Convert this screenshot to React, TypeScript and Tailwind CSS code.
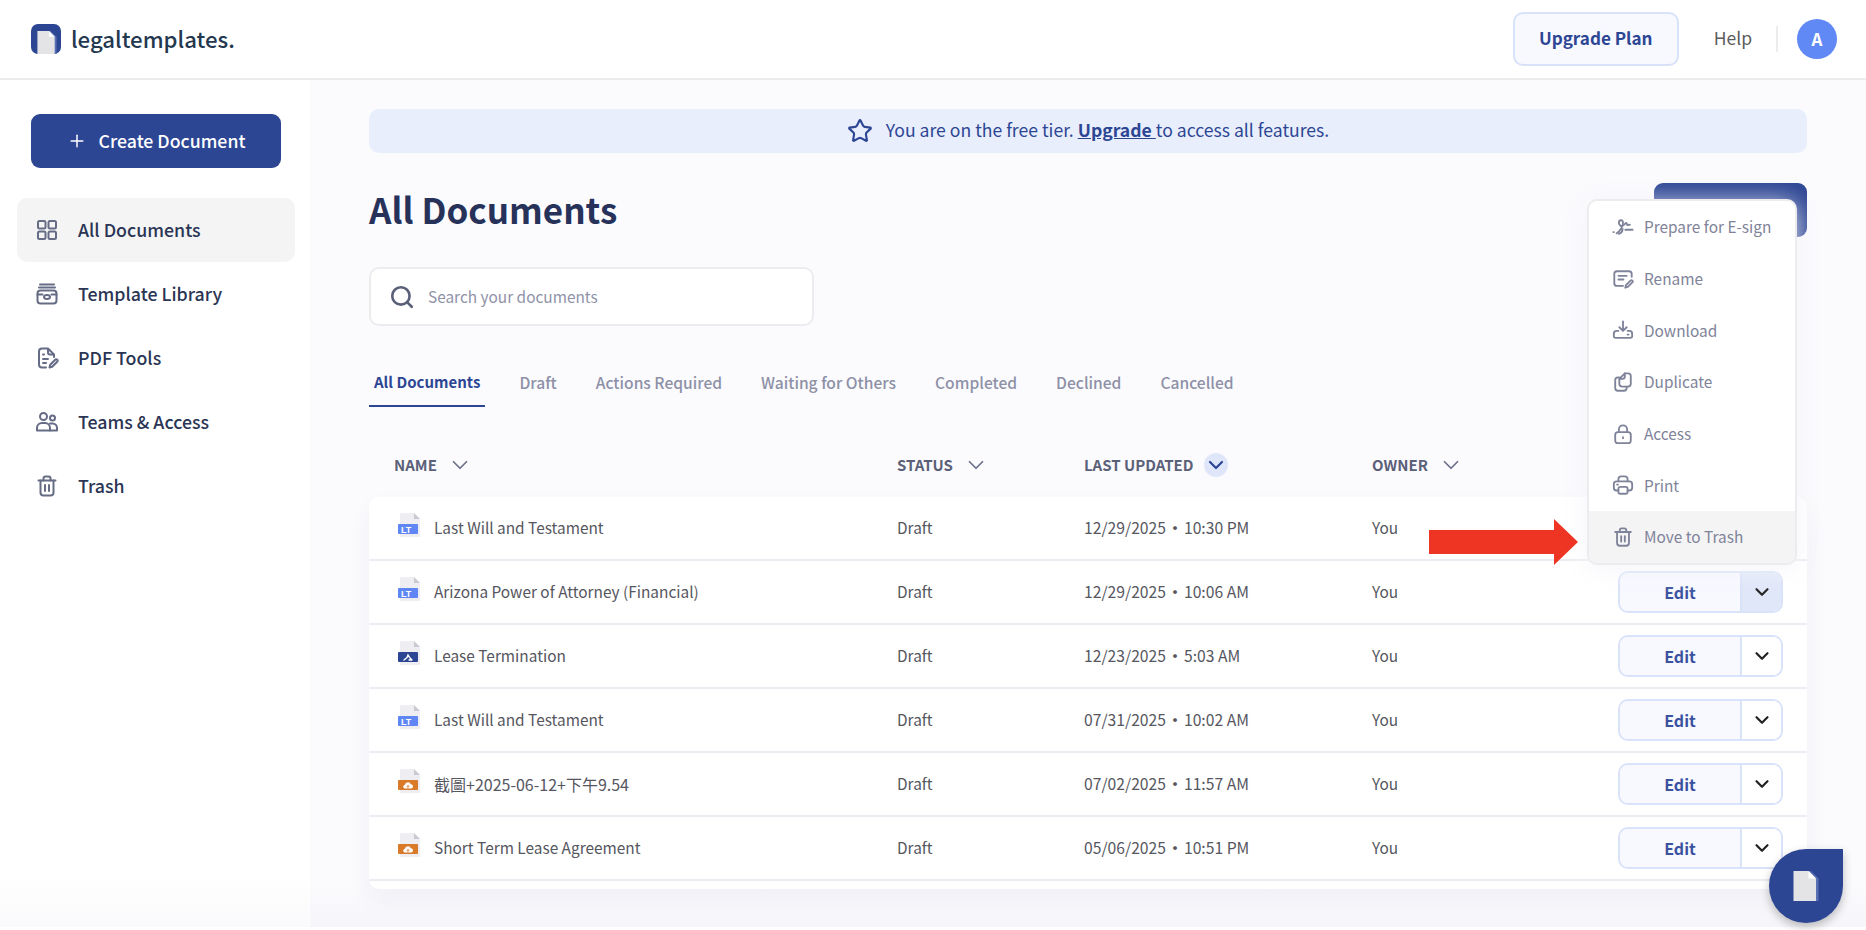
import React from 'react';
import { ChevronDown, Plus, Search, Star } from 'lucide-react';

const FONT = '[font-family:"Noto_Sans_CJK_TC","Noto_Sans",sans-serif]';

type IconProps = { className?: string };

const Svg: React.FC<IconProps & { children: React.ReactNode }> = ({ className, children }) => (
  <svg
    viewBox="0 0 24 24"
    fill="none"
    stroke="currentColor"
    strokeWidth={2}
    strokeLinecap="round"
    strokeLinejoin="round"
    className={className}
  >
    {children}
  </svg>
);

const GridIcon = ({ className }: IconProps) => (
  <Svg className={className}>
    <rect x="3" y="3" width="7.5" height="7.5" rx="1.5" />
    <rect x="13.5" y="3" width="7.5" height="7.5" rx="1.5" />
    <rect x="3" y="13.5" width="7.5" height="7.5" rx="1.5" />
    <rect x="13.5" y="13.5" width="7.5" height="7.5" rx="1.5" />
  </Svg>
);

const LibraryIcon = ({ className }: IconProps) => (
  <Svg className={className}>
    <path d="M5 2.5h14M4 5.5h16" />
    <rect x="2.5" y="8.5" width="19" height="13" rx="3" />
    <path d="M2.5 12.5h5M16.5 12.5h5" />
    <ellipse cx="12" cy="15" rx="3" ry="2" />
  </Svg>
);

const PdfIcon = ({ className }: IconProps) => (
  <Svg className={className}>
    <path d="M11 21.5H7a3 3 0 0 1-3-3v-13a3 3 0 0 1 3-3h6l6 6v2.5" />
    <path d="M13 3v3.5a2 2 0 0 0 2 2h3.5" />
    <path d="M8 8.5h1M8 13h5M8 17h3" />
    <path d="M14.5 21.5l.7-2.8 5-5a1.4 1.4 0 0 1 2 2l-5 5z" />
  </Svg>
);

const TeamIcon = ({ className }: IconProps) => (
  <Svg className={className}>
    <circle cx="8.5" cy="6.5" r="3.5" />
    <circle cx="17.5" cy="8" r="2.5" />
    <path d="M2 20.5v-2.5a5 5 0 0 1 5-5h3a5 5 0 0 1 5 5v2.5z" />
    <path d="M15 20.5h7v-2.5a4.5 4.5 0 0 0-4.5-4.5h-2.5" />
  </Svg>
);

const TrashIcon = ({ className }: IconProps) => (
  <Svg className={className}>
    <path d="M3.5 6.5h17" />
    <path d="M8.5 6.5V4.5a2 2 0 0 1 2-2h3a2 2 0 0 1 2 2v2" />
    <path d="M5.5 6.5v12a3 3 0 0 0 3 3h7a3 3 0 0 0 3-3v-12" />
    <path d="M10 11v6M14 11v6" />
  </Svg>
);

const SignIcon = ({ className }: IconProps) => (
  <Svg className={className}>
    <path d="M1.5 17.5h.5" />
    <path d="M5 19c3-1.5 7.5-8 7-12C11.5 3.500 7.500 4 7.500 7.500c0 3 4.500 4 4 7.500-.3 2-2.500 4-4 4.500" />
    <path d="M12 10.500c1.500-.5 2.500-3 3.500-3s.5 2.500 1.500 2.500 1.500-.5 2.500-.5" />
    <path d="M14.500 15h8" />
  </Svg>
);

const RenameIcon = ({ className }: IconProps) => (
  <Svg className={className}>
    <path d="M12 19.500H5.500a3 3 0 0 1-3-3v-10a3 3 0 0 1 3-3h13a3 3 0 0 1 3 3v3" />
    <path d="M7 8.500h9M7 12.500h5.500" />
    <path d="M14.500 21.500l.7-2.800 5-5a1.400 1.400 0 0 1 2 2l-5 5z" />
  </Svg>
);

const DownloadIcon = ({ className }: IconProps) => (
  <Svg className={className}>
    <path d="M12 2.500v10M8 9l4 4 4-4" />
    <path d="M7 13H5a3 3 0 0 0-3 3v2.500a2 2 0 0 0 2 2h16a2 2 0 0 0 2-2V16a3 3 0 0 0-3-3h-2" />
    <path d="M17 17h1" />
  </Svg>
);

const DuplicateIcon = ({ className }: IconProps) => (
  <Svg className={className}>
    <path d="M14 2.500h3.500a3 3 0 0 1 3 3V14a3 3 0 0 1-3 3H11a3 3 0 0 1-3-3V8.500z" />
    <path d="M14 2.500V6a2.500 2.500 0 0 1-2.500 2.500H8" />
    <path d="M8 7H6.500a3 3 0 0 0-3 3v8.500a3 3 0 0 0 3 3H13a3 3 0 0 0 3-3V17" />
  </Svg>
);

const LockIcon = ({ className }: IconProps) => (
  <Svg className={className}>
    <rect x="3.500" y="10" width="17" height="12" rx="3" />
    <path d="M7.500 10V7a4.500 4.500 0 0 1 9 0v3" />
    <path d="M12 15.500v1" />
  </Svg>
);

const PrintIcon = ({ className }: IconProps) => (
  <Svg className={className}>
    <path d="M7 8V5.500a3 3 0 0 1 3-3h4a3 3 0 0 1 3 3V8" />
    <path d="M7 18H5a3 3 0 0 1-3-3v-4a3 3 0 0 1 3-3h14a3 3 0 0 1 3 3v4a3 3 0 0 1-3 3h-2" />
    <rect x="7" y="14" width="10" height="7.500" rx="2" />
    <path d="M5.500 11.500h1" />
  </Svg>
);

const SheetLogo = ({ className }: IconProps) => (
  <svg viewBox="0 0 20 24" className={className}>
    <path d="M3 0h11l6 6v18H3z" fill="#5a70b4" />
    <path d="M0 0h12l6 6v18H0z" fill="#e4e4e6" />
    <path d="M12 0l6 6h-6z" fill="#ffffff" />
  </svg>
);

type DocKind = 'lt' | 'sign' | 'upload';

const DocIcon = ({ kind }: { kind: DocKind }) => {
  const band = kind === 'lt' ? '#5f86f2' : kind === 'sign' ? '#2d4694' : '#d97a2b';
  return (
    <svg viewBox="0 0 24 26" className="h-[26px] w-[24px] shrink-0">
      <path d="M3 1h14l6 6v18H3z" fill="#eeeef2" />
      <path d="M17 1l6 6h-6z" fill="#c9c9d2" />
      <rect x="1" y="12" width="20" height="10" rx="1" fill={band} />
      {kind === 'lt' && (
        <text x="4" y="20.500" fontSize="9" fontWeight="700" fill="#ffffff" fontFamily="Liberation Sans, sans-serif">
          LT
        </text>
      )}
      {kind === 'sign' && (
        <path d="M7 20l3-2.500 1-2.500 2 3 2 2M12 20h3" stroke="#ffffff" strokeWidth="1.300" fill="none" strokeLinecap="round" />
      )}
      {kind === 'upload' && (
        <>
          <path d="M7.500 20.500a2 2 0 0 1 .5-3.800 3 3 0 0 1 5.800-.5 2.200 2.200 0 0 1 .7 4.300z" fill="#ffffff" />
          <path d="M11 20.500v-3M9.800 18.500l1.200-1.200 1.200 1.200" stroke={band} strokeWidth="0.900" fill="none" />
        </>
      )}
    </svg>
  );
};

const navItems = [
  { name: 'All Documents', icon: GridIcon, active: true },
  { name: 'Template Library', icon: LibraryIcon },
  { name: 'PDF Tools', icon: PdfIcon },
  { name: 'Teams & Access', icon: TeamIcon },
  { name: 'Trash', icon: TrashIcon },
];

const tabs = ['All Documents', 'Draft', 'Actions Required', 'Waiting for Others', 'Completed', 'Declined', 'Cancelled'];

const rows: { name: string; kind: DocKind; date: string; time: string; cjk?: boolean }[] = [
  { name: 'Last Will and Testament', kind: 'lt', date: '12/29/2025', time: '10:30 PM' },
  { name: 'Arizona Power of Attorney (Financial)', kind: 'lt', date: '12/29/2025', time: '10:06 AM' },
  { name: 'Lease Termination', kind: 'sign', date: '12/23/2025', time: '5:03 AM' },
  { name: 'Last Will and Testament', kind: 'lt', date: '07/31/2025', time: '10:02 AM' },
  { name: '截圖+2025-06-12+下午9.54', kind: 'upload', date: '07/02/2025', time: '11:57 AM', cjk: true },
  { name: 'Short Term Lease Agreement', kind: 'upload', date: '05/06/2025', time: '10:51 PM' },
];

const menuItems = [
  { name: 'Prepare for E-sign', icon: SignIcon },
  { name: 'Rename', icon: RenameIcon },
  { name: 'Download', icon: DownloadIcon },
  { name: 'Duplicate', icon: DuplicateIcon },
  { name: 'Access', icon: LockIcon },
  { name: 'Print', icon: PrintIcon },
  { name: 'Move to Trash', icon: TrashIcon, hover: true },
];

const ROW_GRID = 'grid grid-cols-[503px_187px_288px_1fr] items-center pl-[25px]';

const HeaderCell = ({ label, sorted }: { label: string; sorted?: boolean }) => (
  <div className="flex items-center">
    <span className="text-[15px] font-semibold text-[#5b6079]">{label}</span>
    {sorted ? (
      <span className="ml-[10px] flex h-6 w-6 items-center justify-center rounded-full bg-[#e0e6fa]">
        <ChevronDown className="h-6 w-6 text-[#2d4694]" strokeWidth={2.2} />
      </span>
    ) : (
      <ChevronDown className="ml-[10px] h-[26px] w-[26px] text-[#6b7088]" strokeWidth={1.6} />
    )}
  </div>
);

export default function App() {
  return (
    <div className={`relative flex h-[930px] flex-col overflow-hidden bg-white ${FONT}`}>
      {/* Top bar */}
      <header className="flex h-[80px] shrink-0 items-center justify-between border-b-2 border-[#ececef] pl-[31px] pr-[29px]">
        <div className="flex items-center gap-[10px]">
          <div className="flex h-[30px] w-[30px] items-end justify-center overflow-hidden rounded-[7px] bg-[#2d4694] pl-[1px]">
            <SheetLogo className="h-[23px] w-[20px]" />
          </div>
          <span className="mb-[2px] text-[22.2px] font-medium leading-none text-[#24384f]">legaltemplates.</span>
        </div>
        <div className="flex items-center">
          <button className="flex h-[54px] w-[166px] items-center justify-center rounded-[10px] border-2 border-[#d8e2f9] bg-[#f7f9ff] text-[17.1px] font-semibold text-[#2d4694]">
            <span className="mb-[2px]">Upgrade Plan</span>
          </button>
          <span className="mb-[2px] ml-[35px] text-[17.5px] text-[#5c5c5c]">Help</span>
          <span className="ml-[24px] h-[26px] w-[2px] bg-[#ececef]" />
          <span className="ml-[19px] flex h-10 w-10 items-center justify-center rounded-full bg-[#6089f6] text-[17px] font-semibold text-white">
            A
          </span>
        </div>
      </header>

      <div className="flex min-h-0 flex-1 pb-[3px]">
        {/* Sidebar */}
        <aside className="w-[310px] shrink-0 bg-linear-to-b from-white from-[94%] to-[#fafafc]">
          <div className="pl-[31px] pt-[34px]">
            <button className="flex h-[54px] w-[250px] items-center justify-center gap-[12px] rounded-[9px] bg-[#2d4694] text-[17.7px] font-medium text-white">
              <Plus className="h-[20px] w-[20px]" strokeWidth={1.8} />
              <span className="mb-[2px]">Create Document</span>
            </button>
          </div>
          <nav className="mt-[30px] pl-[17px]">
            {navItems.map((item) => {
              const Icon = item.icon;
              return (
                <div
                  key={item.name}
                  className={`flex h-16 w-[278px] items-center gap-[19px] rounded-[10px] pl-[18px] ${
                    item.active ? 'bg-[#f4f4f5]' : ''
                  }`}
                >
                  <Icon className="h-6 w-6 text-[#666c85]" />
                  <span className="mb-[2px] text-[17.8px] font-medium text-[#2b3554]">{item.name}</span>
                </div>
              );
            })}
          </nav>
        </aside>

        {/* Main */}
        <main className="min-w-0 flex-1 bg-linear-to-b from-[#fbfbfe] from-[95%] to-[#f6f6fa] pl-[59px] pr-[59px] pt-[29px]">
          <div className="flex h-11 items-center justify-center rounded-[10px] bg-[#e8eefc] text-[17.6px] text-[#2d4694]">
            <Star className="mr-[13px] h-[26px] w-[26px]" strokeWidth={2} />
            <span className="mb-[1px]">
              You are on the free tier.{' '}
              <a className="font-semibold underline">Upgrade </a>
              to access all features.
            </span>
          </div>

          <div className="mt-[30px] flex h-[54px] items-center justify-between">
            <h1 className="mb-[2px] text-[35px] font-bold text-[#27325a]">All Documents</h1>
            <div className="h-[54px] w-[153px] rounded-[9px] bg-[#2d4694]" />
          </div>

          <div className="mt-[30px] flex h-[59px] w-[445px] items-center rounded-[10px] border-2 border-[#ececef] bg-white pl-[18px]">
            <Search className="h-[26px] w-[26px] text-[#5b6079]" strokeWidth={2.4} />
            <span className="ml-[13px] text-[15.4px] text-[#8f93a8]">Search your documents</span>
          </div>

          <div className="mt-[37px] flex">
            {tabs.map((tab, i) => (
              <div
                key={tab}
                className={`mr-[29px] h-[44px] px-[5px] pt-[8px] ${
                  i === 0
                    ? 'border-b-2 border-[#2d4694] text-[15px] font-semibold text-[#2d4694]'
                    : 'text-[15.6px] font-medium text-[#8d90a6]'
                }`}
              >
                {tab}
              </div>
            ))}
          </div>

          <div className={`${ROW_GRID} mt-[26px] h-[64px]`}>
            <HeaderCell label="NAME" />
            <HeaderCell label="STATUS" />
            <HeaderCell label="LAST UPDATED" sorted />
            <HeaderCell label="OWNER" />
          </div>

          {/* Documents table */}
          <div className="rounded-[10px] bg-white pb-[8px] shadow-[0_12px_24px_rgba(30,40,90,0.05)]">
            {rows.map((row, i) => (
              <div key={i} className={`${ROW_GRID} h-16 border-b-2 border-[#ececf2] text-[15.4px] text-[#55565e]`}>
                <div className="flex items-center">
                  <div className="ml-[3px] mt-[-6px]">
                    <DocIcon kind={row.kind} />
                  </div>
                  <span className={`ml-[13px] ${row.cjk ? 'text-[16px]' : ''}`}>{row.name}</span>
                </div>
                <span>Draft</span>
                <div className="flex items-center text-[15.7px]">
                  <span>{row.date}</span>
                  <span className="w-[18px] text-center text-[15px] font-bold">·</span>
                  <span>{row.time}</span>
                </div>
                <div className="flex items-center justify-between pr-[24px]">
                  <span>You</span>
                  {i > 0 && (
                    <div className="flex h-[42px] w-[165px] overflow-hidden rounded-[10px] border-2 border-[#d8e2f9]">
                      <span className="flex w-[122px] items-center justify-center border-r-2 border-[#d8e2f9] bg-[#f8f9ff] text-[16px] font-semibold text-[#3a52a0]">
                        Edit
                      </span>
                      <span
                        className={`flex flex-1 items-center justify-center ${i === 1 ? 'bg-[#e0e7f9]' : 'bg-white'}`}
                      >
                        <ChevronDown className="h-[22px] w-[22px] text-[#222222]" strokeWidth={2.4} />
                      </span>
                    </div>
                  )}
                </div>
              </div>
            ))}
          </div>
        </main>
      </div>

      {/* Row action menu */}
      <div className="absolute left-[1587px] top-[199px] w-[210px] overflow-hidden rounded-[10px] border-2 border-[#ececef] bg-white text-[15.4px] text-[#7f8399] shadow-[0_4px_26px_rgba(244,244,250,0.95)]">
        {menuItems.map((item) => {
          const Icon = item.icon;
          return (
            <div
              key={item.name}
              className={`flex h-[51.7px] items-center gap-[10px] pl-[23px] ${item.hover ? 'bg-[#f4f4f5]' : ''}`}
            >
              <Icon className="h-[22px] w-[22px] text-[#7f8399]" />
              <span>{item.name}</span>
            </div>
          );
        })}
      </div>

      {/* Annotation arrow */}
      <svg viewBox="0 0 149 46" className="absolute left-[1429px] top-[519px] h-[46px] w-[149px]">
        <path d="M0 11h125V0l24 23-24 23V35H0z" fill="#ee3524" />
      </svg>

      {/* Floating help bubble */}
      <div className="absolute left-[1769px] top-[849px] flex h-[74px] w-[74px] items-center justify-center rounded-full rounded-tr-[6px] bg-[#2d4694] shadow-[0_4px_10px_rgba(0,0,0,0.25)]">
        <SheetLogo className="h-[30px] w-[26px]" />
      </div>
    </div>
  );
}
